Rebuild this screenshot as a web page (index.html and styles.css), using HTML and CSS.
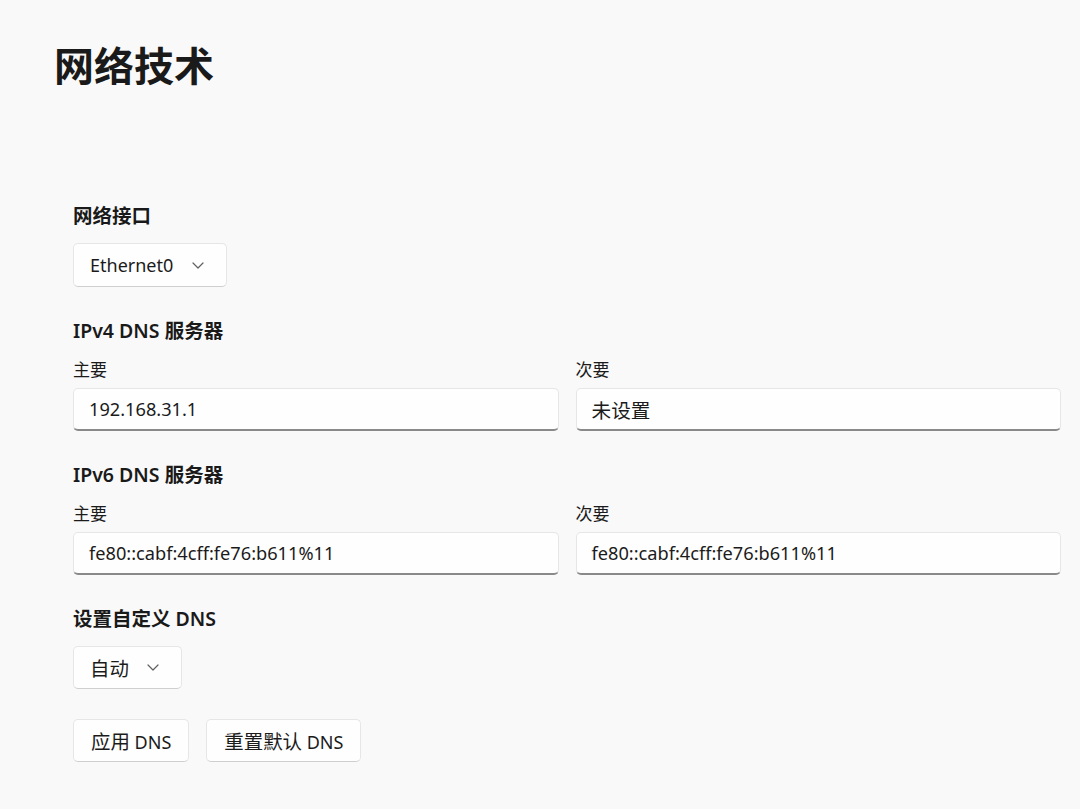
FILE: index.html
```html
<!DOCTYPE html>
<html lang="zh-CN">
<head>
<meta charset="utf-8">
<title>网络技术</title>
<link rel="stylesheet" href="styles.css">
</head>
<body>
<div class="page">
  <h1 class="title">网络技术</h1>
  <div class="content">
    <section class="section">
      <h2 class="heading">网络接口</h2>
      <div class="combo combo-eth">
        <span class="combo-text">Ethernet0</span>
        <svg class="chev" width="12" height="7" viewBox="0 0 12 7"><path d="M1 1 L6 6 L11 1" fill="none" stroke="#606060" stroke-width="1.2" stroke-linecap="round" stroke-linejoin="round"/></svg>
      </div>
    </section>

    <section class="section">
      <h2 class="heading">IPv4 DNS 服务器</h2>
      <div class="pair">
        <div class="field">
          <div class="label">主要</div>
          <div class="input">192.168.31.1</div>
        </div>
        <div class="field">
          <div class="label">次要</div>
          <div class="input"><span class="zh">未设置</span></div>
        </div>
      </div>
    </section>

    <section class="section">
      <h2 class="heading">IPv6 DNS 服务器</h2>
      <div class="pair">
        <div class="field">
          <div class="label">主要</div>
          <div class="input">fe80::cabf:4cff:fe76:b611%11</div>
        </div>
        <div class="field">
          <div class="label">次要</div>
          <div class="input">fe80::cabf:4cff:fe76:b611%11</div>
        </div>
      </div>
    </section>

    <section class="section">
      <h2 class="heading">设置自定义 DNS</h2>
      <div class="combo combo-auto">
        <span class="combo-text zh">自动</span>
        <svg class="chev" width="12" height="7" viewBox="0 0 12 7"><path d="M1 1 L6 6 L11 1" fill="none" stroke="#606060" stroke-width="1.2" stroke-linecap="round" stroke-linejoin="round"/></svg>
      </div>
    </section>

    <section class="section buttons">
      <button class="btn"><span class="zh">应用</span> DNS</button>
      <button class="btn"><span class="zh">重置默认</span> DNS</button>
    </section>
  </div>
</div>
</body>
</html>
```

FILE: styles.css
```css
html, body {
  margin: 0;
  padding: 0;
  background: #f9f9f9;
}

body {
  font-family: "Noto Sans", "Noto Sans CJK SC", sans-serif;
  color: #1b1b1b;
  width: 1080px;
  height: 809px;
  overflow: hidden;
}

.page {
  padding-top: 38px;
}

.title {
  margin: 0 0 0 54px;
  font-family: "Noto Sans CJK SC", sans-serif;
  font-size: 40px;
  line-height: 52px;
  font-weight: 700;
  color: #1a1a1a;
}

.content {
  padding: 0 19px 0 73px;
  margin-top: 112px;
  display: flex;
  flex-direction: column;
  gap: 30px;
}

.section {
  display: flex;
  flex-direction: column;
  align-items: flex-start;
}

.heading {
  margin: 0 0 13px 0;
  font-size: 19.5px;
  line-height: 28px;
  font-weight: 600;
  color: #1a1a1a;
}

.zh {
  font-family: "Noto Sans CJK SC", sans-serif;
  font-size: 1.08em;
}

.combo {
  box-sizing: border-box;
  height: 44px;
  display: flex;
  align-items: center;
  justify-content: space-between;
  padding: 0 22px 0 16px;
  background: #fefefe;
  border: 1px solid #e6e6e6;
  border-bottom-color: #cfcfcf;
  border-radius: 5px;
  font-size: 18px;
  color: #1b1b1b;
}

.combo-eth {
  width: 154px;
}

.combo-auto {
  width: 109px;
  height: 43px;
}

.chev {
  display: block;
}

.pair {
  align-self: stretch;
  display: grid;
  grid-template-columns: 1fr 1fr;
  gap: 17px;
}

.field {
  display: flex;
  flex-direction: column;
}

.label {
  font-size: 17px;
  line-height: 24px;
  margin-bottom: 6px;
  color: #1b1b1b;
}

.input {
  box-sizing: border-box;
  height: 43px;
  display: flex;
  align-items: center;
  padding: 0 15px;
  background: #fefefe;
  border: 1px solid #e6e6e6;
  border-bottom: 2px solid #8a8a8a;
  border-radius: 5px;
  font-size: 18.2px;
  color: #1b1b1b;
}

.buttons {
  flex-direction: row;
  gap: 17px;
}

.btn {
  box-sizing: border-box;
  height: 43px;
  padding: 0 17px;
  background: #fefefe;
  border: 1px solid #e6e6e6;
  border-bottom-color: #cfcfcf;
  border-radius: 5px;
  font-family: "Noto Sans", "Noto Sans CJK SC", sans-serif;
  font-size: 18px;
  color: #1b1b1b;
}
```
